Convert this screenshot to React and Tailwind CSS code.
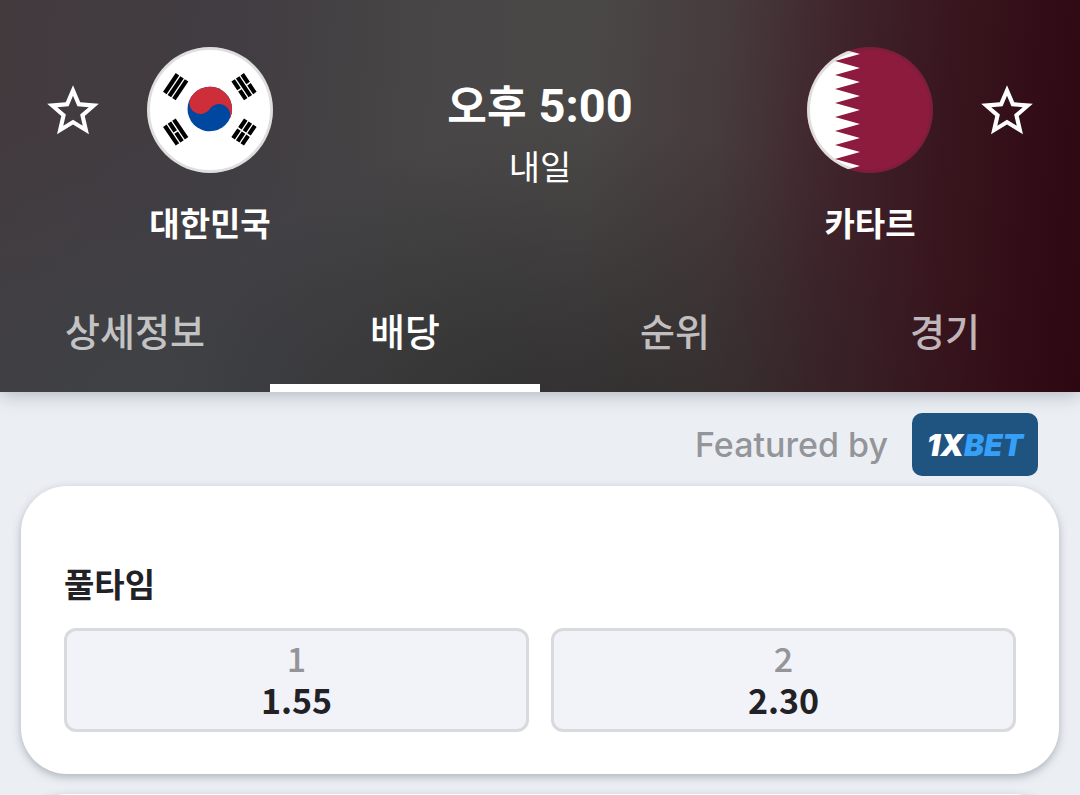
/**
 * Match Odds Screen
 *
 * Match header with team flags, section tabs and the full time odds card.
 */

import React, { useState } from 'react';
import { MdStarBorder } from 'react-icons/md';

const TABS = [
    { id: 'details', label: '상세정보' },
    { id: 'odds', label: '배당' },
    { id: 'standings', label: '순위' },
    { id: 'matches', label: '경기' },
];

const ODDS = [
    { name: '1', value: '1.55' },
    { name: '2', value: '2.30' },
];

// Bars of each trigram: true = solid, false = broken
const TRIGRAMS = [
    { x: 28.7, y: 39.7, angle: -56, bars: [true, true, true] },
    { x: 97, y: 39.7, angle: 56, bars: [false, true, false] },
    { x: 28.7, y: 85, angle: 56, bars: [true, false, true] },
    { x: 97, y: 85, angle: -56, bars: [false, false, false] },
];

function KoreaFlag() {
    return (
        <svg viewBox="0 0 126 126" className="size-[126px]" aria-hidden="true">
            <circle cx="63" cy="63" r="63" fill="#fff" />
            <g transform="translate(62.8 62) rotate(33.7)">
                <circle r="22.3" fill="#0047a0" />
                <path d="M-22.3 0A22.3 22.3 0 0 1 22.3 0A11.15 11.15 0 0 0 0 0A11.15 11.15 0 0 1 -22.3 0Z" fill="#cd2e3a" />
            </g>
            {TRIGRAMS.map(({ x, y, angle, bars }) => (
                <g key={`${x}-${y}`} transform={`translate(${x} ${y}) rotate(${angle})`} stroke="#000" strokeWidth="4.2">
                    {bars.map((solid, i) => (
                        <path
                            key={i}
                            d={solid ? `M-11.3 ${(i - 1) * 5.5}H11.3` : `M-11.3 ${(i - 1) * 5.5}H-0.8M0.8 ${(i - 1) * 5.5}H11.3`}
                        />
                    ))}
                </g>
            ))}
            <circle cx="63" cy="63" r="61.5" fill="none" stroke="#000" strokeOpacity="0.13" strokeWidth="3" />
        </svg>
    );
}

function QatarFlag() {
    return (
        <svg viewBox="0 0 126 126" className="size-[126px]" aria-hidden="true">
            <clipPath id="qatar-circle">
                <circle cx="63" cy="63" r="63" />
            </clipPath>
            <g clipPath="url(#qatar-circle)">
                <rect width="126" height="126" fill="#8d1b3d" />
                <path
                    d="M0 0H28L53 7L28 14L53 21L28 28L53 35L28 42L53 49L28 56L53 63L28 70L53 77L28 84L53 91L28 98L53 105L28 112L53 119L28 126H0Z"
                    fill="#fff"
                />
            </g>
            <circle cx="63" cy="63" r="61.5" fill="none" stroke="#333" strokeOpacity="0.16" strokeWidth="3" />
        </svg>
    );
}

function FavoriteButton({ label }) {
    return (
        <button aria-label={label} className="mt-[33px] text-white">
            <MdStarBorder size={62} />
        </button>
    );
}

function Team({ name, children }) {
    return (
        <div className="flex w-[126px] flex-col items-center">
            {children}
            <h2 className="mt-[27px] text-[33px] leading-[44px] font-bold whitespace-nowrap">{name}</h2>
        </div>
    );
}

function Tabs({ active, onChange }) {
    return (
        <nav className="grid grid-cols-4">
            {TABS.map((tab) => (
                <button
                    key={tab.id}
                    onClick={() => onChange(tab.id)}
                    className={`h-[120px] border-b-8 pt-1 text-[38px] leading-[56px] font-medium ${
                        tab.id === active ? 'border-white text-white' : 'border-transparent text-white/70'
                    }`}
                >
                    {tab.label}
                </button>
            ))}
        </nav>
    );
}

export default function App() {
    const [activeTab, setActiveTab] = useState('odds');

    return (
        <div className="flex h-screen flex-col overflow-hidden bg-[#ebeff4] font-['Noto_Sans_CJK_KR',sans-serif] text-[#212126]">
            {/* Header */}
            <header className="shrink-0 bg-[radial-gradient(ellipse_at_54%_120%,rgba(36,34,33,0.7),transparent_52%),radial-gradient(ellipse_at_14%_100%,rgba(63,66,70,0.9),transparent_48%),linear-gradient(95deg,#433a3e_0%,#413d42_22%,#484646_40%,#4a4747_54%,#463a3c_66%,#3f242b_76%,#38141d_87%,#2d0711_100%)] text-white shadow-[0_2px_18px_rgba(60,70,80,0.35)]">
                <div className="flex items-start justify-between px-[42px] pt-[47px]">
                    <div className="flex items-start gap-[43px]">
                        <FavoriteButton label="대한민국 즐겨찾기" />
                        <Team name="대한민국">
                            <KoreaFlag />
                        </Team>
                    </div>
                    <div className="flex flex-col items-center pt-6">
                        <p className="flex items-baseline gap-3 text-[43px] leading-[64px] font-bold">
                            <span>오후</span>
                            <span className="font-[Roboto,sans-serif] text-[47px]">5:00</span>
                        </p>
                        <p className="text-[34px] leading-[56px]">내일</p>
                    </div>
                    <div className="flex items-start gap-[43px]">
                        <Team name="카타르">
                            <QatarFlag />
                        </Team>
                        <FavoriteButton label="카타르 즐겨찾기" />
                    </div>
                </div>
                <div className="mt-7">
                    <Tabs active={activeTab} onChange={setActiveTab} />
                </div>
            </header>

            {/* Sponsor */}
            <div className="flex shrink-0 items-center justify-end gap-6 px-[42px] pt-[21px] pb-[10px]">
                <span className="font-[Inter,sans-serif] text-[34px] leading-[44px] font-medium text-[#949599]">
                    Featured by
                </span>
                <a
                    href="#"
                    className="flex h-[63px] w-[126px] items-center justify-center rounded-[10px] bg-[#1f5380] font-[Inter,sans-serif] text-[30px] leading-none font-black text-white italic"
                >
                    1X<span className="text-[#36a0f8]">BET</span>
                </a>
            </div>

            {/* Full time odds */}
            <section className="mx-[21px] shrink-0 rounded-[46px] bg-white px-[43px] pt-[73px] pb-[42px] shadow-[0_3px_8px_rgba(60,70,80,0.35)]">
                <h3 className="text-[33px] leading-[48px] font-bold">풀타임</h3>
                <div className="mt-[21px] grid grid-cols-2 gap-[22px]">
                    {ODDS.map((odd) => (
                        <button
                            key={odd.name}
                            className="flex h-[104px] flex-col items-center justify-center rounded-[12px] border-3 border-[#d8dadc] bg-[#f2f3f8] pb-[3px] text-[34px] leading-[42px]"
                        >
                            <span className="font-medium text-[#949599]">{odd.name}</span>
                            <span className="font-bold">{odd.value}</span>
                        </button>
                    ))}
                </div>
            </section>

            {/* Next card, continues below the fold */}
            <section className="mx-[21px] mt-5 h-72 shrink-0 rounded-[46px] bg-white shadow-[0_3px_8px_rgba(60,70,80,0.35)]" />
        </div>
    );
}
